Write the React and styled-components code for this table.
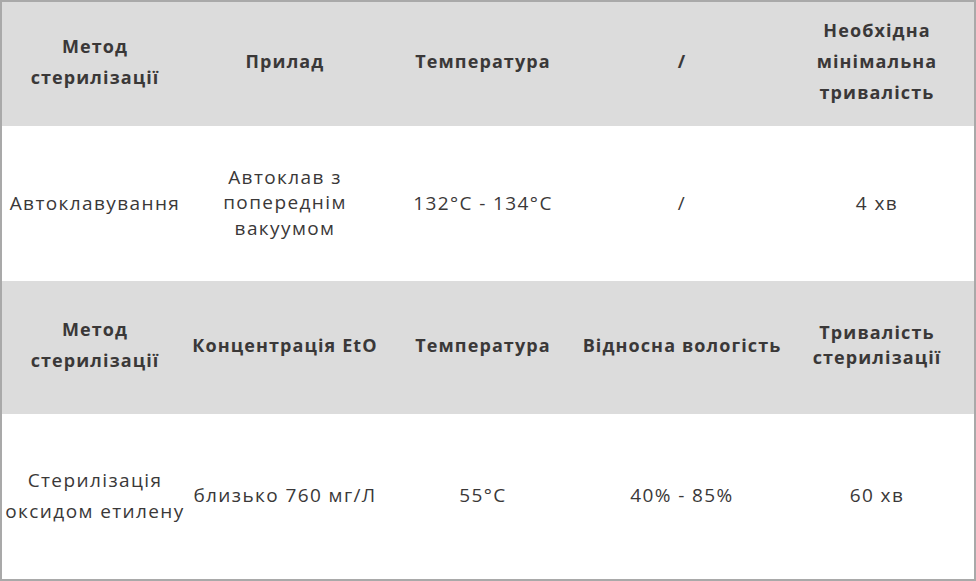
import React from 'react'
import styled, { createGlobalStyle } from 'styled-components'

const GlobalStyle = createGlobalStyle`
    html, body {
        margin: 0;
        padding: 0;
        background: #ffffff;
    }
    body {
        font-family: 'Open Sans', 'Noto Sans', sans-serif;
        color: #3a3838;
    }
`

const tables = [
    {
        head: [
            ['Метод', 'стерилізації'],
            ['Прилад'],
            ['Температура'],
            ['/'],
            ['Необхідна', 'мінімальна', 'тривалість'],
        ],
        headHeight: 124,
        body: [
            { lines: ['Автоклавування'] },
            { lines: ['Автоклав з', 'попереднім', 'вакуумом'], tight: true },
            { lines: ['132°C - 134°C'] },
            { lines: ['/'] },
            { lines: ['4 хв'] },
        ],
        bodyHeight: 155,
    },
    {
        head: [
            ['Метод', 'стерилізації'],
            ['Концентрація EtO'],
            ['Температура'],
            ['Відносна вологість'],
            ['Тривалість', 'стерилізації'],
        ],
        headHeight: 133,
        body: [
            { lines: ['Стерилізація', 'оксидом етилену'] },
            { lines: ['близько 760 мг/Л'] },
            { lines: ['55°C'] },
            { lines: ['40% - 85%'] },
            { lines: ['60 хв'] },
        ],
        bodyHeight: 164,
    },
]

const App = () => {
    return (
        <>
            <GlobalStyle />
            <Frame>
                {tables.map((table, tIndex) => (
                    <React.Fragment key={tIndex}>
                        <Row $head $height={table.headHeight}>
                            {table.head.map((lines, i) => (
                                <HeadCell key={i} $tight={tIndex === 1 && i === 4}>
                                    {lines.map((line, j) => (
                                        <span key={j}>{line}</span>
                                    ))}
                                </HeadCell>
                            ))}
                        </Row>
                        <Row $height={table.bodyHeight}>
                            {table.body.map((cell, i) => (
                                <BodyCell key={i} $tight={cell.tight}>
                                    {cell.lines.map((line, j) => (
                                        <span key={j}>{line}</span>
                                    ))}
                                </BodyCell>
                            ))}
                        </Row>
                    </React.Fragment>
                ))}
            </Frame>
        </>
    )
}

export default App

const Frame = styled.div`
    width: 976px;
    height: 581px;
    box-sizing: border-box;
    border: 2px solid #a9a9a9;
    display: flex;
    flex-direction: column;
    background: #ffffff;
`

const Row = styled.div`
    display: grid;
    grid-template-columns: 186px 194px 202px 196px 194px;
    height: ${(p) => p.$height}px;
    flex-shrink: 0;
    background: ${(p) => (p.$head ? '#dcdcdc' : '#ffffff')};
`

const Cell = styled.div`
    display: flex;
    flex-direction: column;
    align-items: center;
    justify-content: center;
    text-align: center;
    white-space: nowrap;

    span {
        display: block;
    }
`

const HeadCell = styled(Cell)`
    font-size: 18px;
    font-weight: 700;
    letter-spacing: 1.1px;
    line-height: ${(p) => (p.$tight ? '25px' : '31px')};
    color: #3a3838;
    padding-bottom: 5px;
`

const BodyCell = styled(Cell)`
    font-size: 19px;
    font-weight: 400;
    letter-spacing: 1.4px;
    line-height: ${(p) => (p.$tight ? '25.5px' : '31px')};
    color: #3a3838;
    padding-bottom: 1px;
`
